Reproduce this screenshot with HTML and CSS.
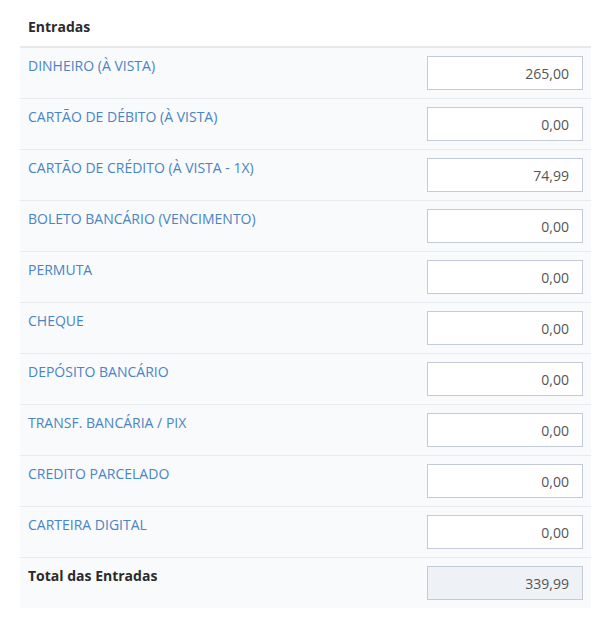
FILE: index.html
```html
<!DOCTYPE html>
<html lang="pt-BR">
<head>
<meta charset="utf-8">
<title>Entradas</title>
<link rel="stylesheet" href="styles.css">
</head>
<body>
<div class="wrap">
<table class="entradas">
  <thead>
    <tr><th colspan="2">Entradas</th></tr>
  </thead>
  <tbody>
    <tr><td class="label">DINHEIRO (À VISTA)</td><td class="val"><input class="field" type="text" value="265,00"></td></tr>
    <tr><td class="label">CARTÃO DE DÉBITO (À VISTA)</td><td class="val"><input class="field" type="text" value="0,00"></td></tr>
    <tr><td class="label">CARTÃO DE CRÉDITO (À VISTA - 1X)</td><td class="val"><input class="field" type="text" value="74,99"></td></tr>
    <tr><td class="label">BOLETO BANCÁRIO (VENCIMENTO)</td><td class="val"><input class="field" type="text" value="0,00"></td></tr>
    <tr><td class="label">PERMUTA</td><td class="val"><input class="field" type="text" value="0,00"></td></tr>
    <tr><td class="label">CHEQUE</td><td class="val"><input class="field" type="text" value="0,00"></td></tr>
    <tr><td class="label">DEPÓSITO BANCÁRIO</td><td class="val"><input class="field" type="text" value="0,00"></td></tr>
    <tr><td class="label">TRANSF. BANCÁRIA / PIX</td><td class="val"><input class="field" type="text" value="0,00"></td></tr>
    <tr><td class="label">CREDITO PARCELADO</td><td class="val"><input class="field" type="text" value="0,00"></td></tr>
    <tr><td class="label">CARTEIRA DIGITAL</td><td class="val"><input class="field" type="text" value="0,00"></td></tr>
    <tr class="total"><td class="label">Total das Entradas</td><td class="val"><input class="field readonly" type="text" value="339,99" readonly></td></tr>
  </tbody>
</table>
</div>
</body>
</html>
```
FILE: styles.css
```css
html, body {
  margin: 0;
  padding: 0;
  background: #ffffff;
}
body {
  font-family: "Open Sans", "Noto Sans", sans-serif;
  font-size: 14px;
  color: #333;
}
.wrap {
  padding: 8px 19px 0 20px;
}
.entradas {
  width: 571px;
  border-collapse: collapse;
}
.entradas th {
  text-align: left;
  font-weight: 700;
  font-size: 14px;
  line-height: 20px;
  color: #2b2b2b;
  padding: 9px 8px 9px;
  border-bottom: 2px solid #e6e8ec;
  background: #fff;
}
.entradas td {
  background: #f9fafc;
  padding: 8px;
  vertical-align: top;
  border-top: 1px solid #e7eaee;
  line-height: 20px;
}
.entradas tbody tr:first-child td {
  border-top: none;
}
.label {
  color: #4a84c4;
  font-size: 14px;
}
.total .label {
  color: #2b2b2b;
  font-weight: 700;
}
.val {
  width: 156px;
  text-align: right;
}
.field {
  display: block;
  box-sizing: border-box;
  width: 156px;
  height: 34px;
  margin: 0;
  border: 1px solid #c3cbd8;
  background: #fff;
  padding: 0 13px 0 8px;
  font-family: "Open Sans", "Noto Sans", sans-serif;
  font-size: 14px;
  color: #555;
  text-align: right;
  outline: none;
  border-radius: 0;
}
.field.readonly {
  background: #eef1f6;
}
```
